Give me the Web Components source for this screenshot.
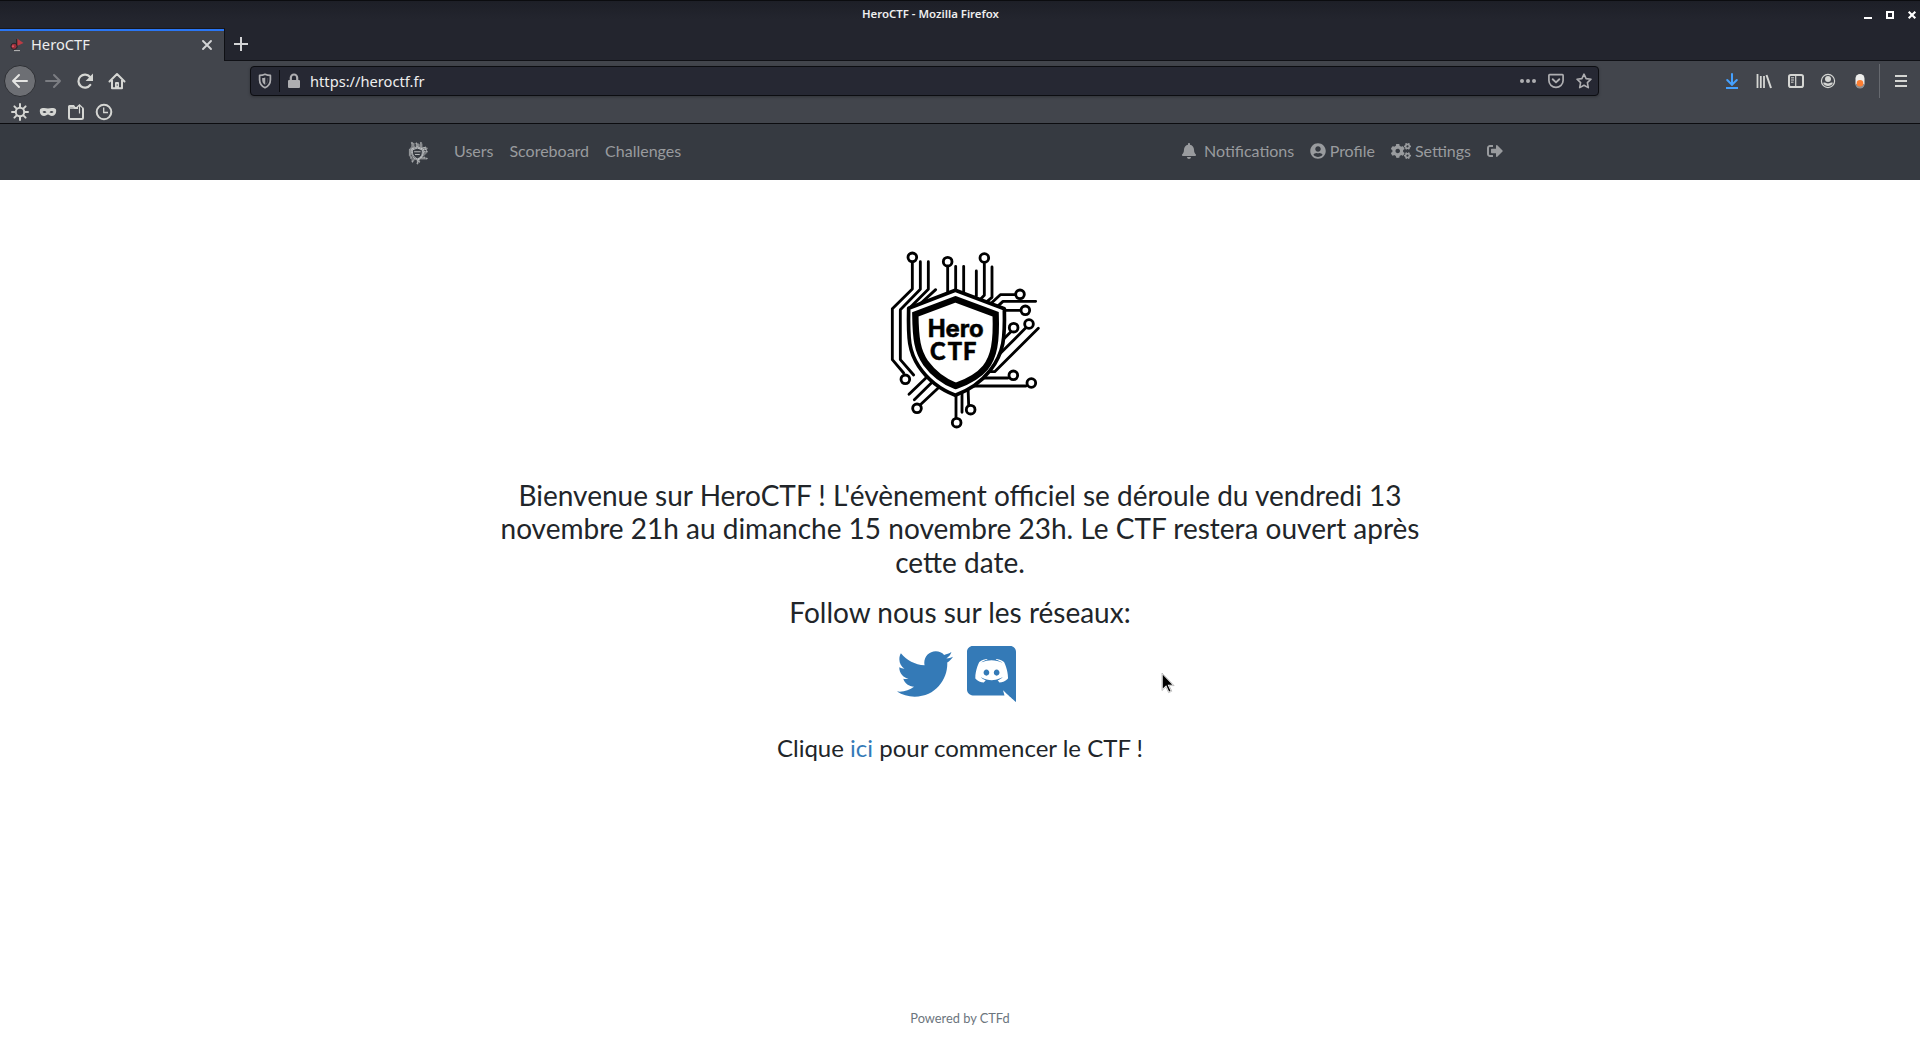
<!DOCTYPE html>
<html lang="fr">
<head>
<meta charset="utf-8">
<title>HeroCTF</title>
<style>
html,body{margin:0;padding:0;height:100%;overflow:hidden;background:#fff}
browser-window{font-family:"Noto Sans",sans-serif}
</style>
</head>
<body>
<browser-window></browser-window>
<script>
const ICONS = {
  back:['0 0 18 18','<g fill="none" stroke="currentColor" stroke-width="2" stroke-linecap="round" stroke-linejoin="round"><path d="M2 9h14M8 3 2 9l6 6"/></g>'],
  forward:['0 0 18 18','<g fill="none" stroke="currentColor" stroke-width="2" stroke-linecap="round" stroke-linejoin="round"><path d="M2 9h14M10 3l6 6-6 6"/></g>'],
  reload:['0 0 18 18','<path d="M14.3 12.8A6.5 6.5 0 1 1 14 5" fill="none" stroke="currentColor" stroke-width="2.2" stroke-linecap="round"/><path d="M17 1.5V9H9.6Z" fill="currentColor"/>'],
  home:['0 0 18 18','<path d="M1.5 9.5 9 2l7.500 7.500M4 8v8.200h10V8" fill="none" stroke="currentColor" stroke-width="2" stroke-linecap="round" stroke-linejoin="round"/><path d="M7 16v-5q0-1 1-1h2q1 0 1 1v5Z" fill="currentColor"/><circle cx="9.200" cy="13" r=".7" fill="#42454c"/>'],
  gear:['0 0 18 18','<circle cx="9" cy="9" r="4.200" fill="none" stroke="currentColor" stroke-width="2"/><path d="M9 1v3M9 14v3M1 9h3M14 9h3M3.400 3.400l2 2M12.600 12.600l2 2M14.600 3.400l-2 2M5.400 12.600l-2 2" stroke="currentColor" stroke-width="2" stroke-linecap="round"/>'],
  mask:['0 0 18 18','<path fill-rule="evenodd" fill="currentColor" d="M1 6.500C2 4.500 6.500 4.600 9 5.500c2.500-.9 7-1 8 1 .8 3-1 6.500-4 6.500-2 0-2.800-1.500-4-1.500s-2 1.500-4 1.500c-3 0-4.800-3.500-4-6.500ZM3.500 9c1 1.300 3 1.200 4 .2C6.400 7.700 4.500 7.600 3.500 9Zm11 0c-1-1.400-2.900-1.300-4 .2C11.500 10.200 13.500 10.300 14.500 9Z"/>'],
  folder:['0 0 18 18','<path d="M11 5H8L6.500 3H2.500Q2 3 2 3.500V14.500q0 1.500 1.500 1.500H14.500q1.500 0 1.500-1.500V6q0-1-1-1" fill="none" stroke="currentColor" stroke-width="2"/><path d="M2 5h9" stroke="currentColor" stroke-width="1.500"/><path d="M12.500 10.500V2M9.800 4.500l2.700-2.700 2.700 2.700" fill="none" stroke="currentColor" stroke-width="1.200"/>'],
  clock:['0 0 18 18','<circle cx="9" cy="9" r="7.300" fill="none" stroke="currentColor" stroke-width="2"/><path d="M8.700 4.500V9.500H13" fill="none" stroke="currentColor" stroke-width="1.300"/>'],
  shield:['0 0 16 16','<path d="M8 1.300c2 .9 3.700 1.100 5.400 1.100v4.300c0 4-2 6.400-5.400 8-3.400-1.600-5.400-4-5.400-8V2.400C4.300 2.400 6 2.200 8 1.300Z" fill="none" stroke="currentColor" stroke-width="1.700" stroke-linejoin="round"/><path d="M8 4.500v7.300C6 10.600 5.200 9 5.200 6.700V5Q7 5 8 4.500Z" fill="currentColor"/><path d="M8.500 4.500v7c1.500-1 2.200-2.500 2.200-4.700V5" fill="none" stroke="currentColor" stroke-width=".5" opacity=".5"/>'],
  lock:['0 0 14 16','<rect x="1" y="7" width="12" height="8" rx="1" fill="currentColor"/><path d="M3.800 8V4.700a3.200 3.200 0 0 1 6.400 0V8" fill="none" stroke="currentColor" stroke-width="2.200"/>'],
  dots:['0 0 16 16','<g fill="currentColor"><circle cx="2" cy="8" r="2"/><circle cx="8" cy="8" r="2"/><circle cx="14" cy="8" r="2"/></g>'],
  pocket:['0 0 16 16','<path d="M1.600 1.700h12.800q.7 0 .7.700V7.500a7.100 6.800 0 0 1-14.200 0V2.400q0-.7.700-.7Z" fill="none" stroke="currentColor" stroke-width="1.700"/><path d="M4.700 6.200 8 9.400l3.300-3.200" fill="none" stroke="currentColor" stroke-width="1.900" stroke-linecap="round" stroke-linejoin="round"/>'],
  star:['0 0 16 16','<path d="m8 1.200 2.100 4.400 4.900.6-3.600 3.400.9 5L8 12.200l-4.300 2.400.9-5L1 6.200l4.900-.6Z" fill="none" stroke="currentColor" stroke-width="1.600" stroke-linejoin="round"/>'],
  download:['0 0 16 18','<path d="M8 2v11M3.200 8 8 12.800 12.800 8" fill="none" stroke="currentColor" stroke-width="2" stroke-linecap="round" stroke-linejoin="round"/><path d="M2 16h12" stroke="currentColor" stroke-width="2"/>'],
  library:['0 0 16 16','<path d="M1.500 1v14M4.800 3v12M8 3v12" stroke="currentColor" stroke-width="1.800"/><path d="m10.500 2 4.500 13" stroke="currentColor" stroke-width="2"/>'],
  sidebar:['0 0 18 18','<rect x="2" y="3" width="14" height="12" rx="1.800" fill="none" stroke="currentColor" stroke-width="2"/><path d="M8.700 3v12" stroke="currentColor" stroke-width="1.200"/><path d="M4 5.800h3M4 8h3M4 10.200h2.500" stroke="currentColor" stroke-width="1"/>'],
  account:['0 0 16 16','<circle cx="8" cy="8" r="6.600" fill="none" stroke="currentColor" stroke-width="1.200"/><circle cx="8" cy="6" r="3" fill="currentColor"/><path d="M3 9.800q2-.8 2.500 0 2.500 1.500 5 0 .8-.8 2.500 0A5.500 5.500 0 0 1 3 9.800Z" fill="currentColor"/>'],
  pill:['0 0 12 16','<rect x="1.500" y="1" width="9" height="14" rx="4.500" fill="#eeeeec"/><path d="M1.500 11a4.500 4.500 0 0 0 9 0" fill="#8e8f91"/><circle cx="6" cy="10.300" r="3.300" fill="#fd7e32"/>'],
  menu:['0 0 14 14','<path d="M1 2h12M1 7h12M1 12h12" stroke="currentColor" stroke-width="2"/>'],
  close:['0 0 12 12','<path d="m2 2 8 8M10 2l-8 8" stroke="currentColor" stroke-width="1.900" stroke-linecap="round"/>'],
  plus:['0 0 14 14','<path d="M7 0v14M0 7h14" stroke="currentColor" stroke-width="2"/>'],
  fav:['0 0 14 14','<path d="M7 .5 13.500 5 7 8Z" fill="#bb3c45"/><path d="M6.800 1v9" stroke="#222" stroke-width="1"/><circle cx="4" cy="8.300" r="3.100" fill="#9c303c" stroke="#24252a" stroke-width="1"/><circle cx="3" cy="8.300" r="1" fill="#e05a64"/><path d="M4 12.600h6" stroke="#b9b9b9" stroke-width="1"/>'],
  wmin:['0 0 8 8','<path d="M0 7h8" stroke="#fff" stroke-width="2"/>'],
  wmax:['0 0 8 8','<rect x="1" y="1" width="6" height="6" fill="none" stroke="#fff" stroke-width="2"/>'],
  wclose:['0 0 8 8','<path d="m.7.7 6.600 6.600M7.300.7.7 7.300" stroke="#fff" stroke-width="2.100"/>'],
  bell:['0 0 448 512','<path fill="currentColor" d="M224 512c35.320 0 63.970-28.650 63.970-64H160.030c0 35.350 28.650 64 63.970 64zm215.390-149.710c-19.320-20.760-55.470-51.990-55.470-154.290 0-77.700-54.480-139.900-127.940-155.160V32c0-17.670-14.320-32-31.980-32s-31.980 14.330-31.980 32v20.840C118.560 68.100 64.080 130.300 64.080 208c0 102.300-36.150 133.530-55.470 154.290-6 6.450-8.660 14.160-8.610 21.710.11 16.400 12.980 32 32.100 32h383.800c19.120 0 32-15.600 32.100-32 .05-7.550-2.610-15.270-8.610-21.710z"/>'],
  user:['0 0 496 512','<path fill="currentColor" d="M248 8C111 8 0 119 0 256s111 248 248 248 248-111 248-248S385 8 248 8zm0 96c48.600 0 88 39.400 88 88s-39.400 88-88 88-88-39.400-88-88 39.400-88 88-88zm0 344c-58.700 0-111.300-26.600-146.500-68.200 18.800-35.400 55.600-59.800 98.500-59.800 2.400 0 4.800.4 7.100 1.100 13 4.200 26.600 6.900 40.900 6.900 14.300 0 28-2.700 40.900-6.900 2.300-.7 4.700-1.100 7.100-1.100 42.900 0 79.700 24.400 98.500 59.800C359.300 421.400 306.700 448 248 448z"/>'],
  cogs:['0 0 640 512',(()=>{const s='<path fill="currentColor" d="M512.1 191l-8.2 14.3c-3 5.3-9.4 7.5-15.1 5.4-11.8-4.4-22.6-10.7-32.1-18.6-4.6-3.8-5.8-10.5-2.8-15.7l8.2-14.3c-6.9-8-12.3-17.3-15.9-27.4h-16.5c-6 0-11.2-4.3-12.2-10.3-2-12-2.1-24.6 0-37.1 1-6 6.2-10.4 12.2-10.4h16.5c3.6-10.1 9-19.4 15.9-27.4l-8.2-14.3c-3-5.2-1.9-11.9 2.8-15.7 9.5-7.9 20.4-14.2 32.1-18.6 5.7-2.1 12.1.1 15.1 5.4l8.2 14.3c10.5-1.9 21.2-1.9 31.7 0L552 6.3c3-5.3 9.4-7.5 15.1-5.4 11.8 4.4 22.6 10.7 32.1 18.6 4.6 3.8 5.8 10.5 2.8 15.7l-8.2 14.3c6.9 8 12.3 17.3 15.9 27.4h16.5c6 0 11.2 4.3 12.2 10.3 2 12 2.1 24.6 0 37.1-1 6-6.2 10.4-12.2 10.4h-16.500c-3.600 10.100-9 19.400-15.900 27.400l8.200 14.300c3 5.200 1.900 11.900-2.800 15.700-9.500 7.900-20.400 14.200-32.100 18.600-5.700 2.100-12.100-.1-15.100-5.400l-8.200-14.300c-10.400 1.900-21.200 1.900-31.700 0zm-10.500-58.800c38.500 29.600 82.400-14.300 52.800-52.800-38.500-29.700-82.400 14.300-52.800 52.800z"/>';return s+'<g transform="translate(0 298.900)">'+s+'</g><path fill="currentColor" d="M386.300 286.100l33.700 16.800c10.100 5.800 14.500 18.100 10.500 29.100-8.900 24.200-26.400 46.400-42.600 65.800-7.400 8.900-20.200 11.100-30.300 5.300l-29.100-16.800c-16 13.700-34.600 24.600-54.900 31.700v33.600c0 11.600-8.300 21.600-19.700 23.600-24.600 4.200-50.400 4.400-75.900 0-11.500-2-20-11.900-20-23.600V418c-20.300-7.200-38.900-18-54.900-31.700L74 403c-10 5.800-22.900 3.600-30.300-5.300-16.200-19.400-33.300-41.600-42.200-65.700-4-10.900.4-23.200 10.500-29.100l33.300-16.800c-3.900-20.900-3.900-42.400 0-63.400L12 205.800c-10.100-5.800-14.600-18.100-10.500-29 8.900-24.200 26-46.400 42.200-65.800 7.400-8.900 20.200-11.100 30.300-5.300l29.100 16.800c16-13.700 34.600-24.600 54.900-31.700V57.100c0-11.500 8.200-21.500 19.600-23.500 24.600-4.200 50.500-4.400 76-.1 11.500 2 20 11.900 20 23.600v33.600c20.300 7.200 38.900 18 54.900 31.700l29.100-16.800c10-5.800 22.900-3.600 30.300 5.300 16.200 19.400 33.200 41.600 42.100 65.800 4 10.900.1 23.200-10 29.100l-33.700 16.800c3.900 21 3.900 42.500 0 63.500zm-117.600 21.100c59.200-77-28.700-164.900-105.700-105.700-59.200 77 28.700 164.900 105.700 105.700z"/>'})()],
  signout:['0 0 512 512','<path fill="currentColor" d="M497 273L329 441c-15 15-41 4.500-41-17v-96H152c-13.300 0-24-10.700-24-24v-96c0-13.300 10.700-24 24-24h136V88c0-21.400 25.900-32 41-17l168 168c9.300 9.400 9.300 24.600 0 34zM192 436v-40c0-6.600-5.400-12-12-12H96c-17.700 0-32-14.300-32-32V160c0-17.700 14.300-32 32-32h84c6.600 0 12-5.400 12-12V76c0-6.600-5.400-12-12-12H96c-53 0-96 43-96 96v192c0 53 43 96 96 96h84c6.600 0 12-5.400 12-12z"/>'],
  twitter:['0 0 512 512','<path fill="currentColor" d="M459.370 151.716c.325 4.548.325 9.097.325 13.645 0 138.720-105.583 298.558-298.558 298.558-59.452 0-114.680-17.219-161.137-47.106 8.447.974 16.568 1.299 25.340 1.299 49.055 0 94.213-16.568 130.274-44.832-46.132-.975-84.792-31.188-98.112-72.772 6.498.974 12.995 1.624 19.818 1.624 9.421 0 18.843-1.300 27.614-3.573-48.081-9.747-84.143-51.980-84.143-102.985v-1.299c13.969 7.797 30.214 12.670 47.431 13.319-28.264-18.843-46.781-51.005-46.781-87.391 0-19.492 5.197-37.360 14.294-52.954 51.655 63.675 129.300 105.258 216.365 109.807-1.624-7.797-2.599-15.918-2.599-24.040 0-57.828 46.782-104.934 104.934-104.934 30.213 0 57.502 12.670 76.670 33.137 23.715-4.548 46.456-13.320 66.599-25.340-7.798 24.366-24.366 44.833-46.132 57.827 21.117-2.273 41.584-8.122 60.426-16.243-14.292 20.791-32.161 39.308-52.628 54.253z"/>'],
  discord:['0 0 448 512','<path fill="currentColor" d="M297.216 243.200c0 15.616-11.520 28.416-26.112 28.416-14.336 0-26.112-12.800-26.112-28.416s11.520-28.416 26.112-28.416c14.592 0 26.112 12.800 26.112 28.416zm-119.552-28.416c-14.592 0-26.112 12.800-26.112 28.416s11.776 28.416 26.112 28.416c14.592 0 26.112-12.800 26.112-28.416.256-15.616-11.520-28.416-26.112-28.416zM448 52.736V512c-64.494-56.994-43.868-38.128-118.784-107.776l13.568 47.360H52.480C23.552 451.584 0 428.032 0 398.848V52.736C0 23.552 23.552 0 52.480 0h343.040C424.448 0 448 23.552 448 52.736zm-72.960 242.688c0-82.432-36.864-149.248-36.864-149.248-36.864-27.648-71.936-26.880-71.936-26.880l-3.584 4.096c43.520 13.312 63.744 32.512 63.744 32.512-60.811-33.329-132.244-33.335-191.232-7.424-9.472 4.352-15.104 7.424-15.104 7.424s21.248-20.224 67.328-33.536l-2.560-3.072s-35.072-.768-71.936 26.880c0 0-36.864 66.816-36.864 149.248 0 0 21.504 37.120 78.080 38.912 0 0 9.472-11.520 17.152-21.248-32.512-9.728-44.800-30.208-44.800-30.208 3.766 2.636 9.976 6.053 10.496 6.400 43.210 24.198 104.588 32.126 159.744 8.960 8.960-3.328 18.944-8.192 29.440-15.104 0 0-12.800 20.992-46.336 30.464 7.680 9.728 16.896 20.736 16.896 20.736 56.576-1.792 78.336-38.912 78.336-38.912z"/>'],
  cursor:['0 0 14 22','<path d="M1 1v17.500l3.900-3.600 2.700 5.800 3.200-1.500-2.700-5.600h5Z" fill="#fff" stroke="#aaa" stroke-width=".7"/><path d="M1.800 2.800v13.600l3.400-3.100 2.900 6.100 1.400-.7-2.900-5.900h4.700Z" fill="#000"/>']
};
const define = (name, html) => customElements.define(name, class extends HTMLElement {
  constructor(){ super(); this.attachShadow({mode:'open'}).innerHTML = html; }
});

customElements.define('ui-icon', class extends HTMLElement {
  connectedCallback(){
    if (this.shadowRoot) return;
    const [box, body] = ICONS[this.getAttribute('name')];
    const w = this.getAttribute('w') || 18, h = this.getAttribute('h') || w;
    this.attachShadow({mode:'open'}).innerHTML =
      `<style>:host{display:block;flex:none;width:${w}px;height:${h}px}svg{display:block;width:100%;height:100%;overflow:visible}</style><svg viewBox="${box}">${body}</svg>`;
  }
});

define('circuit-shield', `
<style>
:host{display:block;width:190px;height:200px}
svg{display:block;width:100%;height:100%}
.line{stroke-width:var(--line,8.500px)}
.outer{stroke-width:var(--outer,11px);fill:var(--face,#fff)}
.bars{display:var(--bars,none)}
</style>
<svg viewBox="0 0 570 600">
 <g class="line" fill="none" stroke="currentColor" stroke-linecap="round" stroke-linejoin="round">
  <path d="M127 82v80L67 221V374l34 40"/><path d="M151 80v83L91 224V374l40 46"/><path d="M175 80v83l-57 57"/><path d="M197 164l-60 55"/>
  <path d="M233 96v76M257 94v72M281 94v78M319 108v75l-12 10M343 86v95l-20 20M366 96v91l-22 18"/>
  <path d="M435 179h-44l-34 32M497 199h-98l-24 22M451 226h-47"/>
  <path d="M422 291l-24 24M466 280L392 354l-28 28M505 280L374 410h-26M414 429h-90M468 453H298"/>
  <path d="M174 423l-57 55M190 438l-57 56M207 457l-56 52M258 482v66M276 468v64M294 455l2 55"/>
 </g>
 <path class="outer" d="M256 166l147 55c2 86 0 131-43 186-29 37-64 59-104 74-42-16-82-45-110-87-29-44-32-80-30-174Z" stroke="currentColor" stroke-linejoin="round"/>
 <path d="M256 193l121 45c3 83-5 128-31 160-24 29-55 43-89 55-34-13-65-35-90-69-25-36-30-72-31-146Z" fill="none" stroke="currentColor" stroke-width="19"/>
 <g class="line" fill="none" stroke="currentColor">
  <circle cx="127" cy="67" r="13"/><circle cx="233" cy="80" r="13"/><circle cx="343" cy="69" r="13"/><circle cx="450" cy="178" r="13"/><circle cx="466" cy="226" r="13"/><circle cx="431" cy="278" r="13"/><circle cx="477" cy="267" r="13"/><circle cx="430" cy="421" r="13"/><circle cx="484" cy="444" r="13"/><circle cx="106" cy="433" r="13"/><circle cx="141" cy="520" r="13"/><circle cx="302" cy="524" r="13"/><circle cx="260" cy="563" r="13"/>
 </g>
 <path class="bars" d="M180 282h155M200 348h115" stroke="currentColor" stroke-width="24" opacity=".75"/>
</svg>`);

/* Full emblem: the circuit shield with its lettering inside. */
define('hero-emblem', `
<style>
:host{display:grid;width:190px;height:200px}
circuit-shield,svg{grid-area:1/1;width:190px;height:200px;display:block}
svg{z-index:1}
text{font-weight:700}
</style><circuit-shield></circuit-shield>
<svg viewBox="0 0 570 600" fill="currentColor" stroke="currentColor" stroke-width="1.500"><text font-family="Inter,sans-serif"><tspan x="173" y="305" font-size="71" textLength="168" lengthAdjust="spacingAndGlyphs">Hero</tspan><tspan x="180 233 279" y="374" font-size="71" font-family="Lato,sans-serif" font-weight="900">CTF</tspan></text></svg>`);

define('title-bar', `
<style>
:host{display:flex;box-sizing:border-box;height:28px;padding:0 4px 0 0;align-items:center;border-top:1px solid #0b0c0f;background:linear-gradient(#1d1f27,#23252e 18px)}
.side{flex:1;display:flex;justify-content:flex-end;gap:14px}
.side.lead{flex:none;width:862px}
b{color:#eee;font-size:11.400px;line-height:16px;font-weight:600;margin-top:-1px}
</style><div class="side lead"></div><b><slot></slot></b><div class="side"><ui-icon name="wmin" w="8"></ui-icon><ui-icon name="wmax" w="8"></ui-icon><ui-icon name="wclose" w="8"></ui-icon></div>`);

define('tab-strip', `
<style>
:host{display:flex;height:33px;background:#23252e;color:#d3d4d6}
.tab{box-sizing:border-box;width:225px;display:flex;align-items:center;border-top:1px solid #17181d;border-right:1px solid #0f1014;background:#42454c;padding:0 11px 1px 10px;position:relative}
.tab::before{content:"";position:absolute;left:0;right:0;top:0;height:2px;background:#2a76f4}
.name{flex:1;color:#eee;font-size:14.670px;margin:-1px 0 0 7px}
.rest{flex:1;border-bottom:1px solid #101116;display:flex;align-items:center;padding-left:9px}
</style><div class="tab"><ui-icon name="fav" w="14"></ui-icon><span class="name"><slot></slot></span><ui-icon name="close" w="12"></ui-icon></div><div class="rest"><ui-icon name="plus" w="14"></ui-icon></div>`);

define('address-bar', `
<style>
:host{box-sizing:border-box;display:flex;align-items:center;width:1349px;height:30px;border:1px solid #0c0d11;border-radius:4px;background:#262833;color:#aeaeb1;padding:0 6px 0 6px;box-shadow:0 1px 3px #0004}
i{width:1px;height:22px;background:#0c0d11;margin:0 7px 0 6px}
.url{flex:1;color:#eee;font-size:14.670px;margin-left:9px}
.acts{display:flex;gap:12px}
</style><ui-icon name="shield" w="16"></ui-icon><i></i><ui-icon name="lock" w="14" h="16"></ui-icon><span class="url"><slot></slot></span><div class="acts"><ui-icon name="dots" w="16"></ui-icon><ui-icon name="pocket" w="16"></ui-icon><ui-icon name="star" w="16"></ui-icon></div>`);

define('nav-toolbar', `
<style>
:host{box-sizing:border-box;display:flex;align-items:center;height:40px;background:#42454c;color:#d5d6d3;padding:0 12px 0 4px}
.back{width:30px;height:30px;border:1px solid #2e3035;border-radius:50%;background:#6d6f74;display:flex;align-items:center;justify-content:center;color:#e5e5e3}
.nav{display:flex;align-items:center;width:246px}
.ext{flex:1;display:flex;align-items:center;justify-content:flex-end}
.dim{color:#7b7d82}.dl{color:#45a1ff}
i{width:1px;height:34px;background:#66696f;margin:0 14px 0 13px}
</style>
<div class="nav"><div class="back"><ui-icon name="back"></ui-icon></div><ui-icon class="dim" name="forward" style="margin-left:8px"></ui-icon><ui-icon name="reload" style="margin-left:14px"></ui-icon><ui-icon name="home" style="margin-left:14px"></ui-icon></div>
<address-bar><slot></slot></address-bar>
<div class="ext"><ui-icon class="dl" name="download" w="16" h="18"></ui-icon><ui-icon name="library" w="16" style="margin-left:16px"></ui-icon><ui-icon name="sidebar" style="margin-left:15px"></ui-icon><ui-icon name="account" w="16" style="margin-left:15px"></ui-icon><ui-icon name="pill" w="12" h="16" style="margin-left:18px"></ui-icon><i></i><ui-icon name="menu" w="14"></ui-icon></div>`);

define('bookmark-bar', `
<style>:host{box-sizing:border-box;display:flex;align-items:center;gap:10px;height:23px;padding:0 11px 0;background:#42454c;border-bottom:1px solid #0c0c0f;color:#d5d6d3}</style>
<ui-icon name="gear"></ui-icon><ui-icon name="mask"></ui-icon><ui-icon name="folder"></ui-icon><ui-icon name="clock"></ui-icon>`);

define('nav-link', `
<style>:host{display:flex;align-items:center;gap:var(--gap,4px);padding:0 8px;font-size:16px;line-height:24px;white-space:nowrap}</style><slot></slot>`);

define('site-nav', `
<style>
:host{display:block;background:#363a41;height:56px;font-family:Lato,sans-serif;color:#999b9e}
.container{box-sizing:border-box;width:1140px;height:56px;margin:0 auto;padding:0 15px 2px;display:flex;align-items:center}
circuit-shield{--line:14px;--outer:16px;--face:none;--bars:inline;width:25px;height:25px;margin:3px 15px 0 1px;color:#dcdedf}
.group{display:flex}.right{margin-left:auto}
</style>
<div class="container"><circuit-shield></circuit-shield><div class="group"><nav-link>Users</nav-link><nav-link>Scoreboard</nav-link><nav-link>Challenges</nav-link></div>
<div class="group right"><nav-link style="--gap:8px;margin-right:-.5px"><ui-icon name="bell" w="14" h="16"></ui-icon><span>Notifications</span></nav-link><nav-link><ui-icon name="user" w="16"></ui-icon><span>Profile</span></nav-link><nav-link><ui-icon name="cogs" w="20" h="16"></ui-icon><span>Settings</span></nav-link><nav-link style="padding-right:12px"><ui-icon name="signout" w="16"></ui-icon></nav-link></div></div>`);

define('welcome-page', `
<style>
:host{flex:1;display:flex;flex-direction:column;align-items:center;background:#fff;color:#212529;font-family:Lato,sans-serif;text-align:center}
hero-emblem{margin:55px 0 0 10px;color:#000}
h3{font-size:28px;line-height:33.600px;font-weight:400;margin:0;width:930px}
.intro{margin-top:43.600px}.follow{margin-top:17px}
.social{display:flex;gap:14px;color:#347ab7;margin:16px 0 0 -8px}
h4{font-size:24px;line-height:28.800px;font-weight:400;margin:32.400px 0 0}
a{color:#347ab7}
footer{margin-top:auto;padding-bottom:20px;font-size:12.800px;line-height:22px;color:#6c757d}
</style>
<hero-emblem></hero-emblem>
<h3 class="intro">Bienvenue sur HeroCTF ! L'évènement officiel se déroule du vendredi 13 novembre 21h au dimanche 15 novembre 23h. Le CTF restera ouvert après cette date.</h3>
<h3 class="follow">Follow nous sur les réseaux:</h3>
<div class="social"><ui-icon name="twitter" w="56"></ui-icon><ui-icon name="discord" w="49" h="56"></ui-icon></div>
<h4>Clique <a>ici</a> pour commencer le CTF !</h4>
<footer>Powered by CTFd</footer>`);

define('browser-window', `
<style>
:host{position:relative;display:flex;flex-direction:column;height:100vh;overflow:hidden}
.pointer{position:absolute;left:1161px;top:672px}
</style>
<title-bar>HeroCTF - Mozilla Firefox</title-bar><tab-strip>HeroCTF</tab-strip><nav-toolbar>https://heroctf.fr</nav-toolbar><bookmark-bar></bookmark-bar><site-nav></site-nav><welcome-page></welcome-page>
<ui-icon class="pointer" name="cursor" w="14" h="22"></ui-icon>`);
</script>
</body>
</html>
